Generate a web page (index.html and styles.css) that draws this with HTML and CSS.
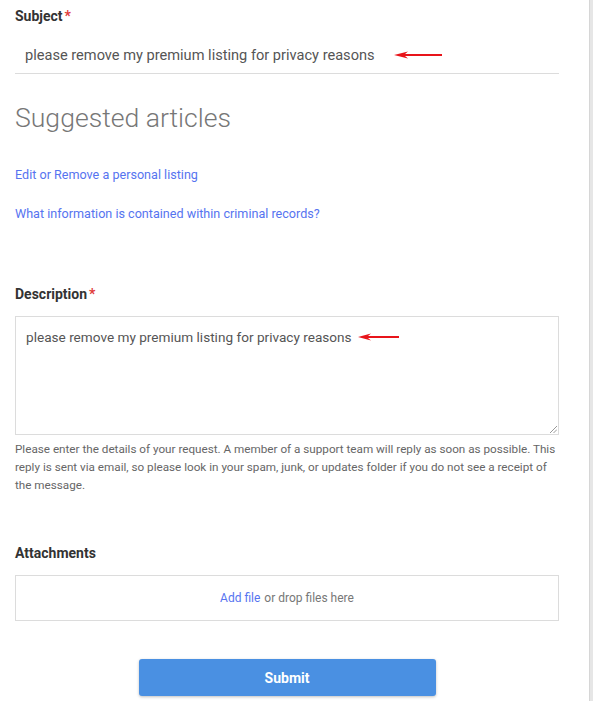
FILE: index.html
```html
<!DOCTYPE html>
<html>
<head>
<meta charset="utf-8">
<link rel="stylesheet" href="styles.css">
</head>
<body>
<div class="page">
  <form class="form">
    <div class="field">
      <label class="label">Subject<span class="req">*</span></label>
      <div class="subject-input">
        <span>please remove my premium listing for privacy reasons</span>
        <svg class="arrow arrow-lg" width="48" height="8" viewBox="0 0 48 8"><path d="M0 4 L14 0.5 L11 3 L48 3 L48 5 L11 5 L14 7.5 Z" fill="#e8141a"/></svg>
      </div>
    </div>

    <section class="suggest">
      <h2 class="suggest-title">Suggested articles</h2>
      <ul class="suggest-list">
        <li><a href="#">Edit or Remove a personal listing</a></li>
        <li><a href="#">What information is contained within criminal records?</a></li>
      </ul>
    </section>

    <div class="field desc-field">
      <label class="label">Description<span class="req">*</span></label>
      <div class="textarea">
        <span>please remove my premium listing for privacy reasons</span>
        <svg class="arrow arrow-sm" width="41" height="8" viewBox="0 0 41 8"><path d="M0 4 L13 0.5 L10 3 L41 3 L41 5 L10 5 L13 7.5 Z" fill="#e8141a"/></svg>
        <svg class="grip" width="8" height="8" viewBox="0 0 8 8"><path d="M1 8 L8 1 M4.5 8 L8 4.5" stroke="#999" stroke-width="1"/></svg>
      </div>
      <p class="hint">Please enter the details of your request. A member of a support team will reply as soon as possible. This reply is sent via email, so please look in your spam, junk, or updates folder if you do not see a receipt of the message.</p>
    </div>

    <div class="field attach-field">
      <label class="label">Attachments</label>
      <div class="dropzone"><a href="#">Add file</a> or drop files here</div>
    </div>

    <div class="actions">
      <button type="button" class="submit">Submit</button>
    </div>
  </form>
  <div class="edge"></div>
</div>
</body>
</html>
```
FILE: styles.css
```css
html, body {
  margin: 0;
  padding: 0;
  background: #fff;
}
body {
  font-family: Roboto, "Liberation Sans", Arial, sans-serif;
  color: #555;
  overflow: hidden;
}
.page {
  display: flex;
  width: 593px;
  height: 701px;
}
.form {
  width: 544px;
  padding-left: 15px;
  flex: none;
}
.edge {
  margin-left: auto;
  width: 3px;
  background: #e6e6e6;
  border-left: 1px solid #d6d6d6;
}
.label {
  display: block;
  font-size: 14px;
  font-weight: 700;
  color: #333;
  line-height: 20px;
  padding-top: 6px;
}
.req {
  color: #e03a3a;
  margin-left: 2px;
}
.subject-input {
  display: flex;
  align-items: center;
  height: 38px;
  margin-top: 10px;
  padding-left: 10px;
  border-bottom: 1px solid #dcdcdc;
  font-size: 14.6px;
  color: #555;
  box-sizing: border-box;
}
.arrow-lg {
  margin-left: 19px;
}
.suggest-title {
  margin: 28px 0 0 0;
  font-size: 26.6px;
  font-weight: 300;
  color: #777;
  line-height: 32px;
}
.suggest-list {
  list-style: none;
  margin: 33px 0 0 0;
  padding: 0;
}
.suggest-list li {
  font-size: 12.6px;
  line-height: 16px;
  margin-bottom: 23px;
}
.suggest-list a {
  color: #5674f0;
  text-decoration: none;
}
.desc-field {
  margin-top: 62px;
}
.desc-field .label {
  padding-top: 0;
}
.textarea {
  position: relative;
  display: flex;
  height: 119px;
  margin-top: 12px;
  padding: 11px 10px 0 10px;
  align-items: flex-start;
  border: 1px solid #dcdcdc;
  box-sizing: border-box;
  font-size: 13.6px;
  line-height: 18px;
  color: #555;
}
.arrow-sm {
  margin-left: 6px;
  margin-top: 5px;
}
.grip {
  position: absolute;
  right: 1px;
  bottom: 1px;
}
.hint {
  margin: 5px 0 0 0;
  font-size: 11.7px;
  line-height: 18px;
  color: #666;
}
.attach-field {
  margin-top: 49px;
}
.attach-field .label {
  padding-top: 0;
}
.dropzone {
  margin-top: 12px;
  height: 46px;
  border: 1px solid #dcdcdc;
  box-sizing: border-box;
  display: flex;
  align-items: center;
  justify-content: center;
  font-size: 12px;
  color: #777;
  gap: 4px;
}
.dropzone a {
  color: #5674f0;
  text-decoration: none;
}
.actions {
  display: flex;
  justify-content: center;
  margin-top: 38px;
}
.submit {
  width: 297px;
  height: 37px;
  border: none;
  border-radius: 3px;
  background: #4a90e2;
  color: #fff;
  font-family: Roboto, "Liberation Sans", Arial, sans-serif;
  font-size: 14px;
  font-weight: 700;
  box-shadow: 0 1px 3px rgba(0,0,0,0.25);
}
```
